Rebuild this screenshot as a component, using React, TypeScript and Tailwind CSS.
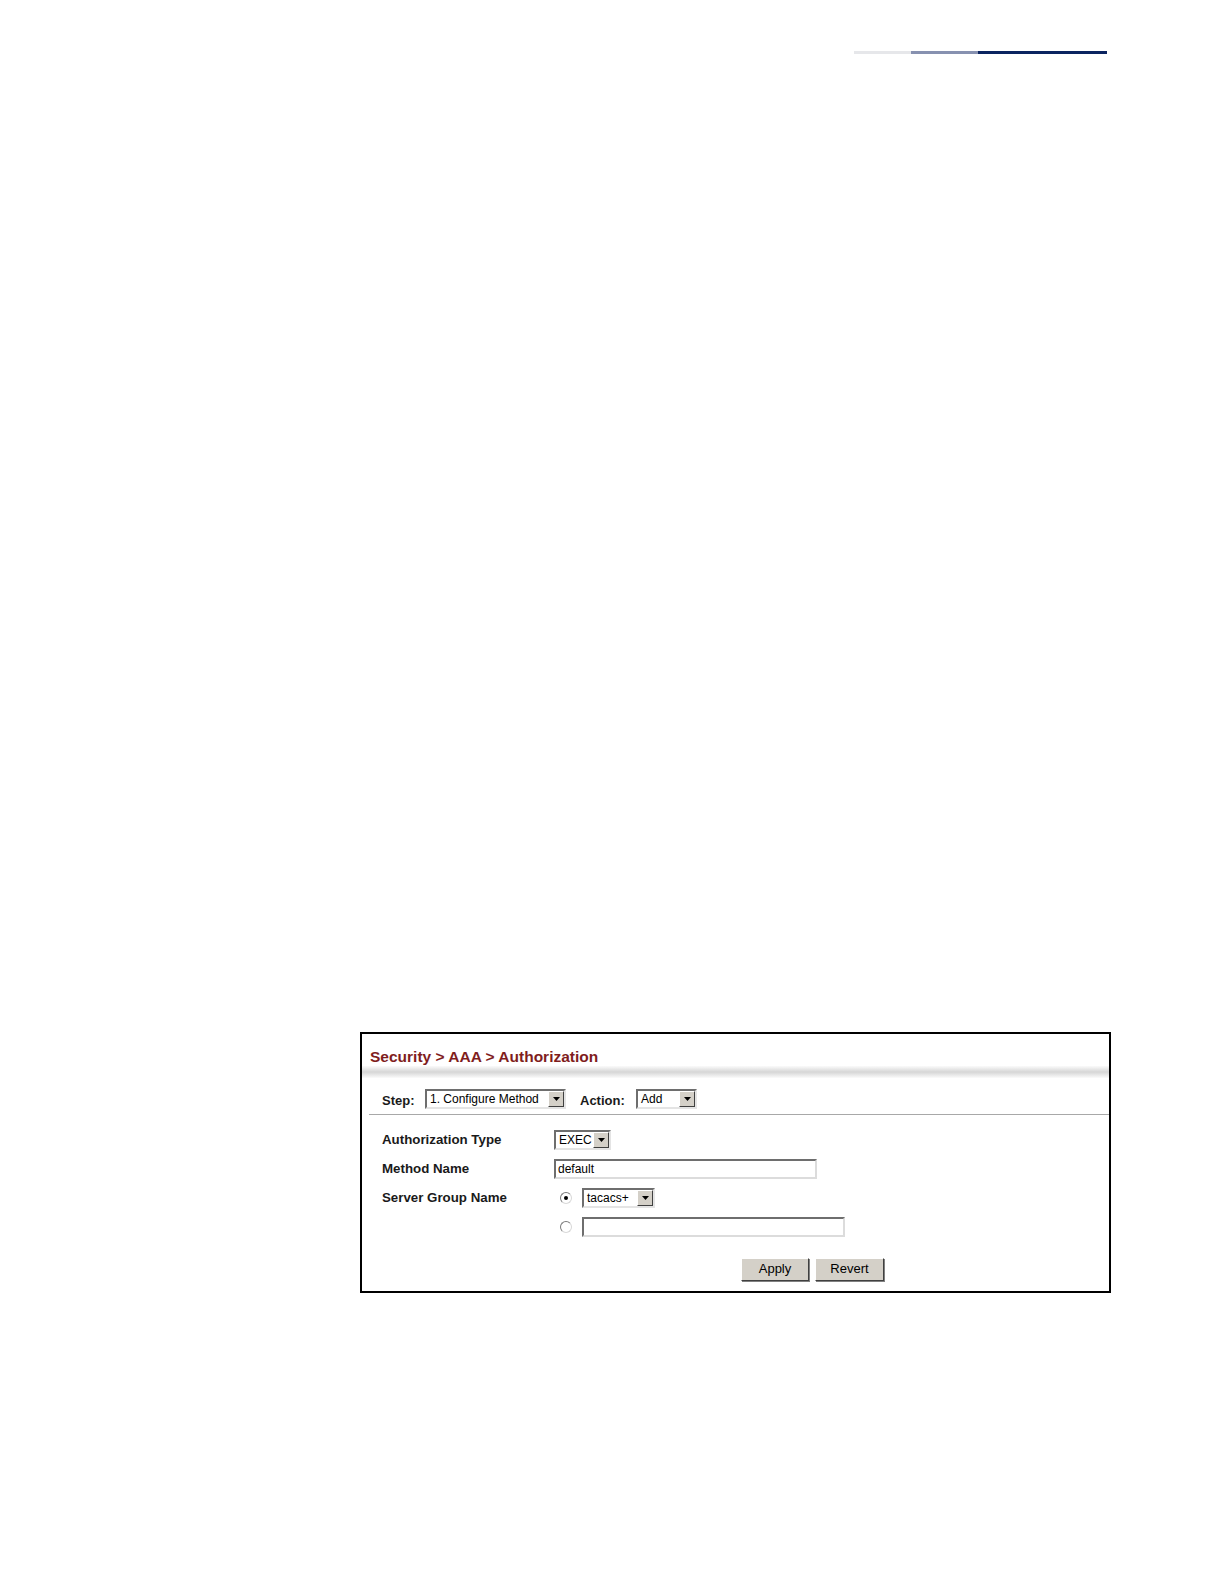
import React from "react";

const font = { fontFamily: '"Liberation Sans", Arial, sans-serif' };

function Arrow() {
  return (
    <div className="flex h-full w-[16px] items-center justify-center border border-t-white border-l-white border-r-[#404040] border-b-[#404040] bg-[#d4d0c8]">
      <svg width="7" height="4" viewBox="0 0 7 4">
        <polygon points="0,0 7,0 3.5,4" fill="#000" />
      </svg>
    </div>
  );
}

function Select({ value, width }: { value: string; width: string }) {
  return (
    <div
      className={`flex h-[20px] ${width} items-stretch border-2 border-t-[#6e6e6e] border-l-[#6e6e6e] border-r-[#e4e4e4] border-b-[#e4e4e4] bg-white`}
    >
      <span className="flex-1 truncate pl-[3px] text-[12px] leading-[16px] text-black">{value}</span>
      <Arrow />
    </div>
  );
}

function TextInput({ value, width }: { value?: string; width: string }) {
  return (
    <div
      className={`h-[20px] ${width} border-2 border-t-[#6e6e6e] border-l-[#6e6e6e] border-r-[#dcdcdc] border-b-[#dcdcdc] bg-white pl-[2px] text-[12px] leading-[16px] text-black`}
    >
      {value}
    </div>
  );
}

function Radio({ checked }: { checked?: boolean }) {
  return (
    <div className="flex h-[12px] w-[12px] items-center justify-center rounded-full border border-t-[#7a7a7a] border-l-[#7a7a7a] border-r-[#d8d8d8] border-b-[#d8d8d8] bg-white">
      {checked && <div className="h-[4px] w-[4px] rounded-full bg-black" />}
    </div>
  );
}

function Button({ label, width }: { label: string; width: string }) {
  return (
    <div
      className={`flex h-[23px] ${width} items-center justify-center border border-t-white border-l-white border-r-[#404040] border-b-[#404040] bg-[#d4d0c8] text-[13px] text-black shadow-[1px_1px_0_#808080]`}
    >
      {label}
    </div>
  );
}

export default function App() {
  return (
    <div className="min-h-[1584px] w-[1224px] bg-white pt-[51px]" style={font}>
      <div className="ml-[854px] flex h-[3px]">
        <div className="w-[57px] bg-[#e6e7ea]" />
        <div className="w-[67px] bg-[#8791b0]" />
        <div className="w-[129px] bg-[#0b2460]" />
      </div>

      <div className="ml-[360px] mt-[978px] h-[261px] w-[751px] border-2 border-black bg-white">
        <div className="h-[32px] pl-[8px] pt-[14px] text-[15.5px] font-bold leading-[18px] text-[#7f1d1d]">
          Security &gt; AAA &gt; Authorization
        </div>
        <div className="h-[12px] bg-gradient-to-b from-[#fbfbfb] via-[#d6d6d6] to-[#fbfbfb]" />

        <div className="flex items-center pl-[20px] pt-[10px]">
          <span className="mt-[3px] w-[43px] text-[13px] font-bold text-[#1a1a1a]">Step:</span>
          <Select value="1. Configure Method" width="w-[141px]" />
          <span className="ml-[14px] mt-[3px] w-[56px] text-[13px] font-bold text-[#1a1a1a]">Action:</span>
          <Select value="Add" width="w-[61px]" />
        </div>
        <div className="ml-[7px] mt-[3px] h-px bg-[#a8a8a8]" />

        <div className="flex flex-col gap-[9px] pl-[20px] pt-[15px]">
          <div className="flex items-center">
            <span className="w-[172px] text-[13.3px] font-bold text-[#1a1a1a]">Authorization Type</span>
            <Select value="EXEC" width="w-[57px]" />
          </div>
          <div className="flex items-center">
            <span className="w-[172px] text-[13.3px] font-bold text-[#1a1a1a]">Method Name</span>
            <TextInput value="default" width="w-[263px]" />
          </div>
          <div className="flex items-center">
            <span className="w-[172px] text-[13.3px] font-bold text-[#1a1a1a]">Server Group Name</span>
            <div className="flex items-center gap-[10px] pl-[6px]">
              <Radio checked />
              <Select value="tacacs+" width="w-[73px]" />
            </div>
          </div>
          <div className="flex items-center">
            <span className="w-[172px]" />
            <div className="flex items-center gap-[10px] pl-[6px]">
              <Radio />
              <TextInput width="w-[263px]" />
            </div>
          </div>
        </div>

        <div className="ml-[379px] mt-[21px] flex gap-[6px]">
          <Button label="Apply" width="w-[68px]" />
          <Button label="Revert" width="w-[69px]" />
        </div>
      </div>
    </div>
  );
}
